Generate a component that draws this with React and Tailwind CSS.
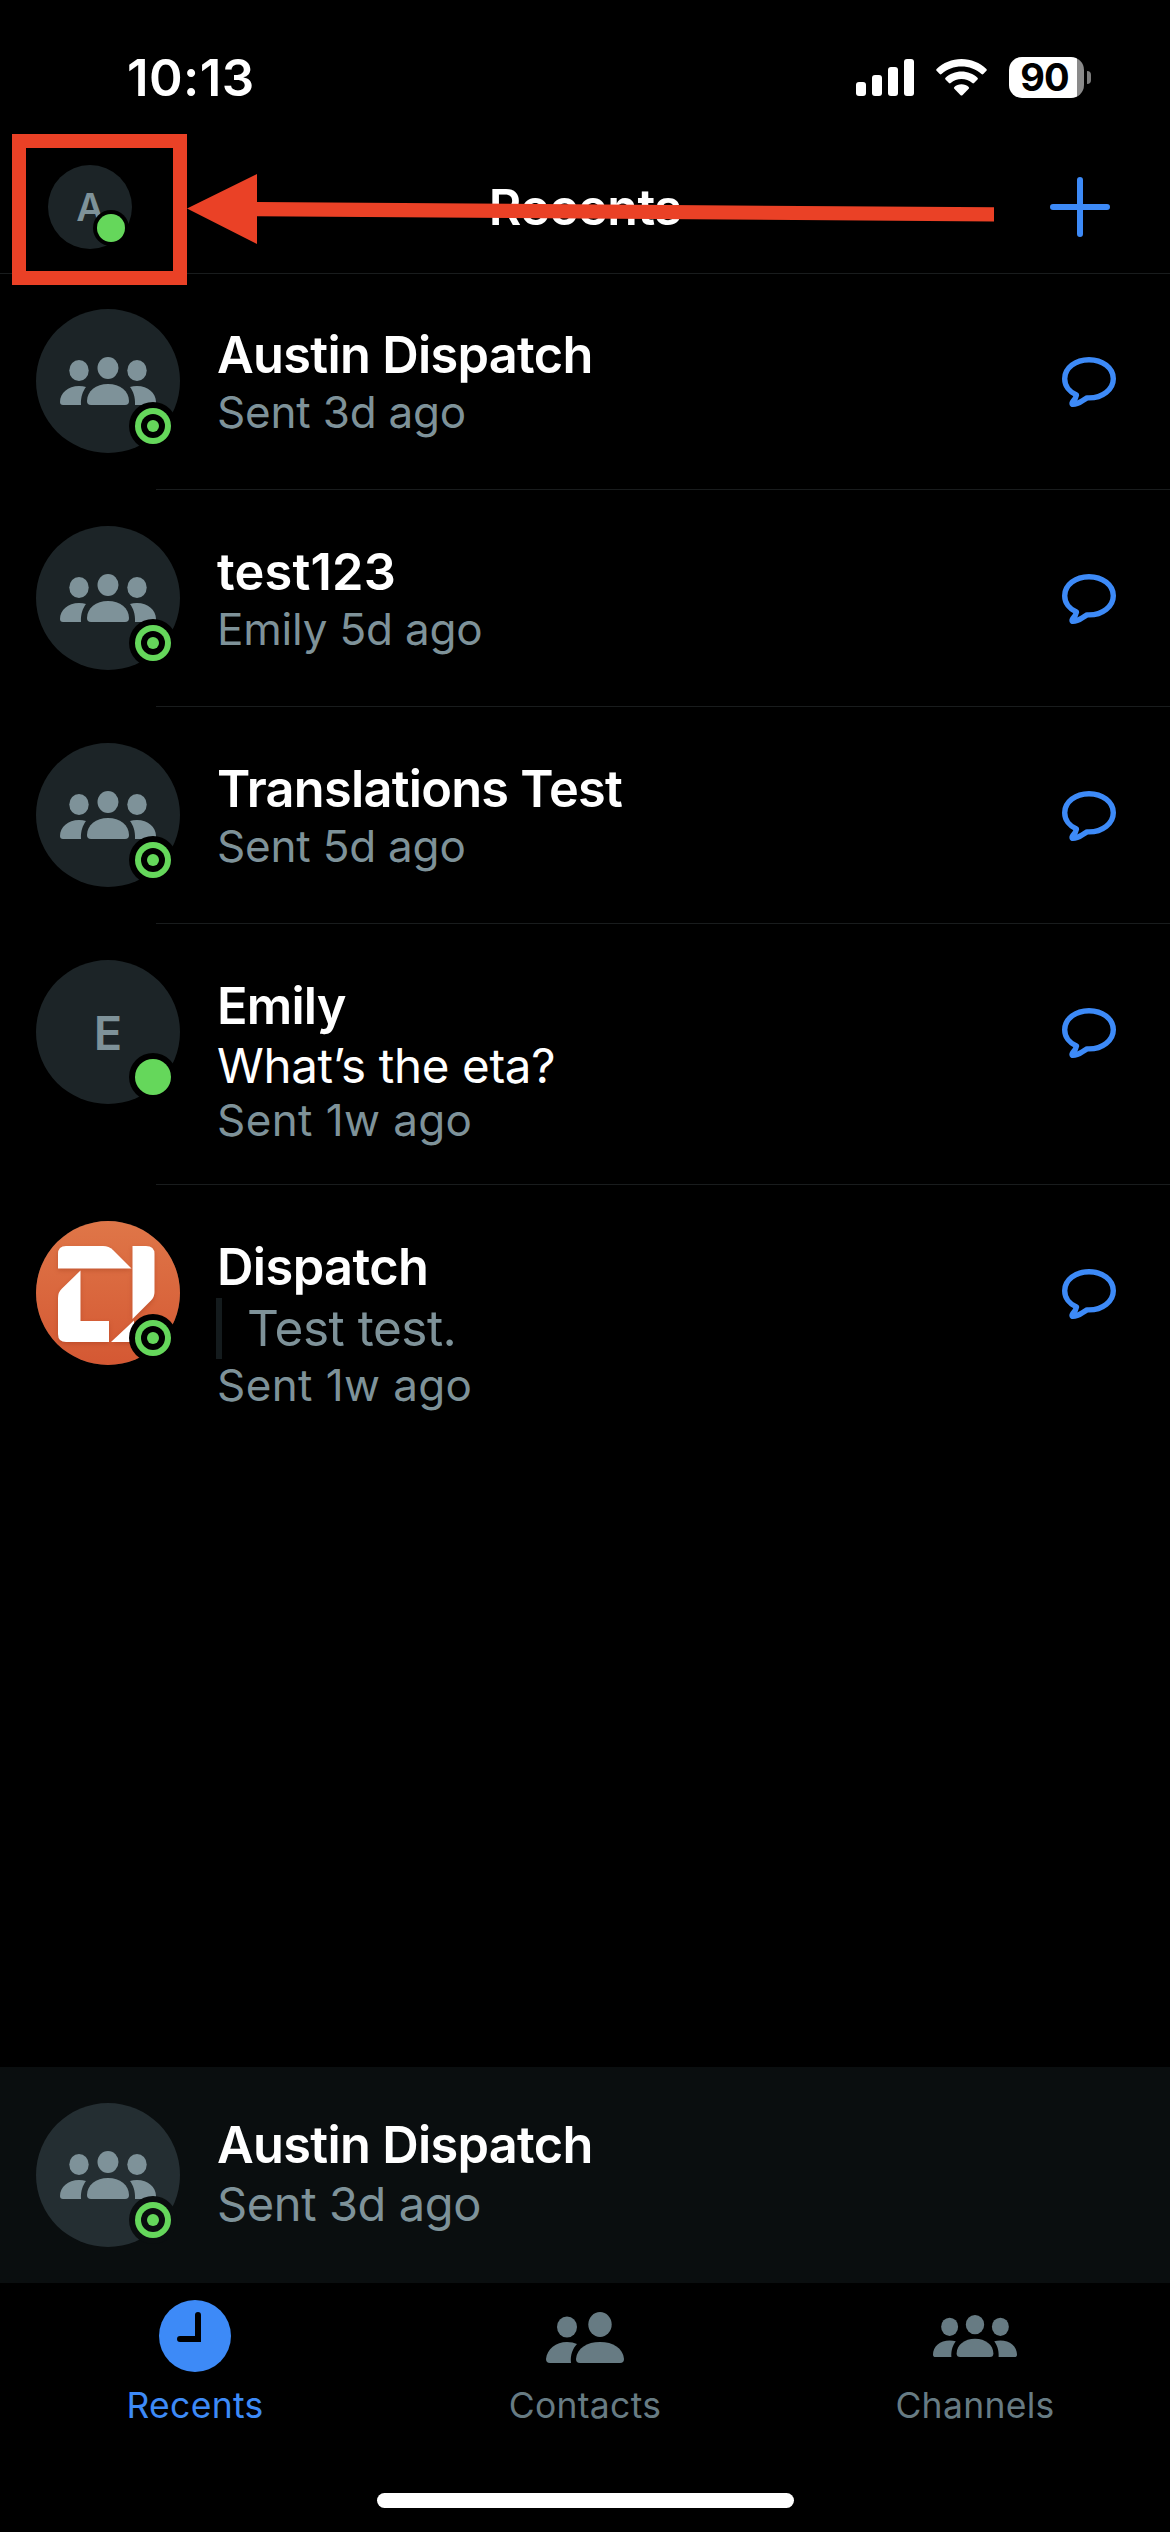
import clsx from 'clsx';

const threads = [
  { id: 1, name: 'Austin Dispatch', meta: 'Sent 3d ago', avatar: 'group', tracking: 'tracking-[-0.7px]' },
  { id: 2, name: 'test123', meta: 'Emily 5d ago', avatar: 'group', tracking: 'tracking-[0.2px]' },
  { id: 3, name: 'Translations Test', meta: 'Sent 5d ago', avatar: 'group', tracking: 'tracking-[-0.75px]' },
  { id: 4, name: 'Emily', message: 'What’s the eta?', meta: 'Sent 1w ago', avatar: 'letter', tracking: 'tracking-[-0.8px]' },
  { id: 5, name: 'Dispatch', quote: 'Test test.', meta: 'Sent 1w ago', avatar: 'logo', tracking: 'tracking-[-0.6px]' },
];

function GroupIcon({ className }) {
  return (
    <svg viewBox="0 0 96 48" fill="currentColor" className={className}>
      <ellipse cx="19" cy="13.5" rx="9.7" ry="10.5" />
      <ellipse cx="48" cy="11" rx="10.5" ry="11" />
      <ellipse cx="77" cy="13.5" rx="9.7" ry="10.5" />
      <path d="M26 30C23 34 20.5 40 21 48H3Q0 48 0 45C0 36 8 29 19 29Q23 29 26 30Z" />
      <path d="M70 30C73 34 75.5 40 75 48H93Q96 48 96 45C96 36 88 29 77 29Q73 29 70 30Z" />
      <path d="M31 48Q27 48 27 44C27 34 36 27 48 27S69 34 69 44Q69 48 65 48Z" />
    </svg>
  );
}

function ContactsIcon({ className }) {
  return (
    <svg viewBox="0 0 78 51" fill="currentColor" className={className}>
      <ellipse cx="21" cy="15" rx="10" ry="10.5" />
      <ellipse cx="54" cy="12.5" rx="11.7" ry="12.5" />
      <path d="M31 32C27 36 24 43 25 51H4Q0 51 0 47C1 37 10 30 21 30Q27 30 31 32Z" />
      <path d="M34 51Q30 51 30 47C31 36 41 30 54 30S77 36 78 47Q78 51 74 51Z" />
    </svg>
  );
}

function ClockIcon({ className }) {
  return (
    <svg viewBox="0 0 72 72" className={className}>
      <circle cx="36" cy="36" r="36" fill="currentColor" />
      <path d="M39 15V39H21" fill="none" stroke="#000" strokeWidth="6" strokeLinecap="round" />
    </svg>
  );
}

function ChatIcon() {
  return (
    <svg viewBox="0 0 54 50" fill="none" stroke="#3d8af7" strokeWidth="5.4" strokeLinejoin="round" className="h-[50px] w-[54px]">
      <path d="M27 2.7C40.5 2.7 51.3 11 51.3 21.7S40.5 40.9 27 40.9H25L20 44C16.5 46.300 13 47.300 11 47.300C9.800 47.300 9.800 46 10.500 45C12.500 43 14 41 14.500 38C7.500 35 2.700 29 2.700 21.700C2.700 11 13.500 2.700 27 2.700Z" />
    </svg>
  );
}

function DispatchLogo() {
  return (
    <svg viewBox="0 0 144 144" className="h-full w-full">
      <defs>
        <linearGradient id="logo-bg" x1="0" y1="0" x2="0" y2="1">
          <stop offset="0" stopColor="#df7648" />
          <stop offset="1" stopColor="#d45833" />
        </linearGradient>
      </defs>
      <circle cx="72" cy="72" r="72" fill="url(#logo-bg)" />
      <g fill="#fff" className="drop-shadow-[0_2px_2px_rgba(150,50,20,0.35)]">
        <path d="M22 47.500V33Q22 25 30 25H67Q73 25 77 29L95.500 47.500Z" />
        <path d="M44.500 49.500V100H73V121H30Q22 121 22 113V77Q22 71 26 67.500Z" />
        <path d="M96.500 25H110Q118.500 25 118.500 33V71Q118.500 76 115 79.500L96.500 98Z" />
        <path d="M98 99.500V121H75Z" />
      </g>
    </svg>
  );
}

function StatusBadge({ ring, onBar }) {
  return (
    <span
      className={clsx(
        'absolute right-[3px] bottom-[3px] flex size-12 items-center justify-center rounded-full',
        onBar ? 'bg-[#0a0e0f]' : 'bg-black'
      )}
    >
      <span className="flex size-9 items-center justify-center rounded-full bg-[#65d75b]">
        {ring && (
          <span className={clsx('flex size-6 items-center justify-center rounded-full', onBar ? 'bg-[#0a0e0f]' : 'bg-black')}>
            <span className="size-3 rounded-full bg-[#65d75b]" />
          </span>
        )}
      </span>
    </span>
  );
}

function Avatar({ kind, onBar }) {
  return (
    <div
      className={clsx(
        'relative flex size-36 shrink-0 items-center justify-center rounded-full text-[#7e9299]',
        onBar ? 'bg-[#242e32]' : 'bg-[#1c2427]'
      )}
    >
      {kind === 'group' && <GroupIcon className="h-12 w-24" />}
      {kind === 'letter' && <span className="text-[47px] leading-none font-semibold">E</span>}
      {kind === 'logo' && <DispatchLogo />}
      <StatusBadge ring={kind !== 'letter'} onBar={onBar} />
    </div>
  );
}

function ThreadRow({ thread, last }) {
  const tall = thread.message || thread.quote;

  return (
    <li>
      <div className={clsx('flex items-start pt-9 pr-[54px] pl-9', tall ? 'h-[260px]' : 'h-[216px]')}>
        <Avatar kind={thread.avatar} />
        <div className="ml-[37px] flex-1 pt-[15px]">
          <h2 className={clsx('text-[50.5px] leading-[62px] font-semibold', thread.tracking)}>{thread.name}</h2>
          {thread.message && <p className="text-[47.5px] leading-[57px] tracking-[-0.35px]">{thread.message}</p>}
          {thread.quote && (
            <blockquote className="-ml-px border-l-6 border-[#141b1d] pl-[25px] text-[49.5px] leading-[61px] tracking-[-0.5px] text-[#7e9299]">
              {thread.quote}
            </blockquote>
          )}
          <p
            className={clsx(
              'text-[44px] leading-[53px] text-[#7e9299]',
              tall ? 'tracking-[0.4px]' : 'tracking-[-0.2px]'
            )}
          >
            {thread.meta}
          </p>
        </div>
        <div className="pt-12">
          <ChatIcon />
        </div>
      </div>
      <div className={clsx('ml-39 h-px', !last && 'bg-[#191c1d]')} />
    </li>
  );
}

function StatusBar() {
  return (
    <div className="flex h-[134px] items-start justify-between pr-[79px] pl-[127px]">
      <span className="mt-[47px] text-[51px] leading-[62px] font-semibold tracking-[0.4px]">10:13</span>
      <div className="mt-[57px] flex items-center">
        <svg viewBox="0 0 58 37" fill="#fff" className="h-[37px] w-[58px]">
          <rect x="0" y="23" width="10" height="14" rx="3" />
          <rect x="16" y="16" width="10" height="21" rx="3" />
          <rect x="32" y="8" width="10" height="29" rx="3" />
          <rect x="48" y="0" width="10" height="37" rx="3" />
        </svg>
        <svg viewBox="0 0 51 37" fill="#fff" className="ml-[22px] h-[37px] w-[51px]">
          <path d="M25.5 0C35 0 44 3.8 50.4 10Q51.2 11 50.4 11.8L47.3 15Q46.4 15.8 45.5 15C40 10 33 7.4 25.5 7.4S11 10 5.5 15Q4.6 15.8 3.7 15L.6 11.8Q-.2 11 .6 10C7 3.8 16 0 25.5 0Z" />
          <path d="M25.5 12.5C31.5 12.5 37.2 14.8 41.5 18.7Q42.4 19.6 41.5 20.5L38 24Q37.2 24.8 36.3 24C33.3 21.4 29.5 20 25.5 20S17.7 21.4 14.7 24Q13.8 24.8 13 24L9.5 20.5Q8.6 19.6 9.5 18.7C13.8 14.8 19.5 12.5 25.5 12.5Z" />
          <path d="M25.5 25.2C28.3 25.2 30.8 26.2 32.7 27.9Q33.5 28.8 32.7 29.7L26.4 36.2Q25.5 37 24.6 36.2L18.3 29.7Q17.5 28.8 18.3 27.9C20.2 26.2 22.7 25.2 25.5 25.2Z" />
        </svg>
        <div className="ml-[22px] flex h-[41px] w-[75px] items-center justify-center rounded-[13px] bg-[linear-gradient(90deg,#fff_68px,#8a8a8a_68px)] text-[38px] leading-[41px] font-bold tracking-[-1px] text-black">
          <span className="-ml-1">90</span>
        </div>
        <div className="ml-[3px] h-[13px] w-1 rounded-r-full bg-[#7c7c7c]" />
      </div>
    </div>
  );
}

function Header() {
  return (
    <header className="grid h-[140px] grid-cols-[1fr_auto_1fr] items-start border-b border-[#191c1d] pr-[60px] pl-12">
      <div className="relative mt-[31px] flex size-21 items-center justify-center rounded-full bg-[#1c2427] text-[38px] font-semibold text-[#7e9299]">
        A
        <span className="absolute right-[3px] bottom-[3px] flex size-9 items-center justify-center rounded-full bg-black">
          <span className="size-7 rounded-full bg-[#65d75b]" />
        </span>
      </div>
      <h1 className="mt-[42px] mr-[-12px] text-[50px] leading-[62px] font-semibold tracking-[-0.4px]">Recents</h1>
      <svg viewBox="0 0 60 60" stroke="#3d8af7" strokeWidth="6" strokeLinecap="round" className="mt-[43px] size-15 justify-self-end">
        <path d="M30 3V57M3 30H57" />
      </svg>
    </header>
  );
}

// Red callout pointing at the profile avatar
function Callout() {
  return (
    <>
      <div className="absolute top-[134px] left-3 h-[151px] w-[175px] border-14 border-[#ea4126]" />
      <svg viewBox="0 0 807 70" fill="#ea4126" className="absolute top-[174px] left-[187px] h-[70px] w-[807px]">
        <path d="M0 34.5L70 0V28L807 33.3V47.5L70 42.2V70Z" />
      </svg>
    </>
  );
}

function Tab({ label, active, children }) {
  return (
    <div className={clsx('flex flex-1 flex-col items-center', active ? 'text-[#3d8af7]' : 'text-[#677b83]')}>
      <div className="flex h-[72px] items-center">{children}</div>
      <span className="mt-[13px] text-[35.5px] leading-[42px] tracking-[0.3px]">{label}</span>
    </div>
  );
}

export default function App() {
  return (
    <div className="relative flex h-[2532px] w-[1170px] flex-col overflow-hidden bg-black font-['Inter',sans-serif] text-white">
      <StatusBar />
      <Header />
      <ul className="-mt-px flex-1">
        {threads.map((thread, i) => (
          <ThreadRow key={thread.id} thread={thread} last={i === threads.length - 1} />
        ))}
      </ul>

      <section className="flex h-54 items-start bg-[#0a0e0f] pt-9 pl-9">
        <Avatar kind="group" onBar />
        <div className="ml-[37px] pt-[11px]">
          <h2 className="text-[50.5px] leading-[62px] font-semibold tracking-[-0.7px]">Austin Dispatch</h2>
          <p className="text-[47px] leading-[55px] tracking-[-0.4px] text-[#7e9299]">Sent 3d ago</p>
        </div>
      </section>

      <nav className="flex h-[210px] items-start pt-[17px]">
        <Tab label="Recents" active>
          <ClockIcon className="size-18" />
        </Tab>
        <Tab label="Contacts">
          <ContactsIcon className="mt-[3px] h-[51px] w-[78px]" />
        </Tab>
        <Tab label="Channels">
          <GroupIcon className="h-[42px] w-21" />
        </Tab>
      </nav>
      <div className="mx-auto mb-6 h-[15px] w-[417px] shrink-0 rounded-full bg-white" />

      <Callout />
    </div>
  );
}
